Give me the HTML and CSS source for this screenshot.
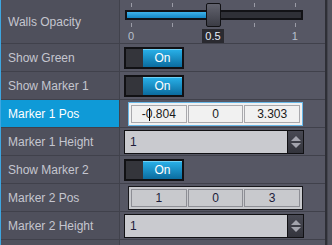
FILE: index.html
```html
<!DOCTYPE html>
<html lang="en">
<head>
  <meta charset="UTF-8" />
  <title>Properties</title>
  <link rel="stylesheet" href="styles.css">
</head>
<body>
  <div class="panel">
    <div class="props">

      <div class="row row-tall">
        <div class="label">Walls Opacity</div>
        <div class="value">
          <div class="slider">
            <div class="ticks"><i></i><i></i><i></i><i></i><i></i></div>
            <div class="track"><div class="fill" style="width: 88px"></div></div>
            <div class="ticks"><i></i><i></i><i></i><i></i><i></i></div>
            <div class="scale">
              <span>0</span><span class="current">0.5</span><span>1</span>
            </div>
            <div class="thumb" style="left: 81px"></div>
          </div>
        </div>
      </div>

      <div class="row">
        <div class="label">Show Green</div>
        <div class="value">
          <div class="toggle"><span class="knob"></span><span class="on">On</span></div>
        </div>
      </div>

      <div class="row">
        <div class="label">Show Marker 1</div>
        <div class="value">
          <div class="toggle"><span class="knob"></span><span class="on">On</span></div>
        </div>
      </div>

      <div class="row selected">
        <div class="label">Marker 1 Pos</div>
        <div class="value">
          <div class="vector focused">
            <span class="cell"><span class="caret"></span>-0.804</span>
            <span class="cell">0</span>
            <span class="cell">3.303</span>
          </div>
        </div>
      </div>

      <div class="row">
        <div class="label">Marker 1 Height</div>
        <div class="value">
          <div class="spin">
            <span class="spin-text">1</span>
            <span class="spin-btn"><b class="up"></b><b class="down"></b></span>
          </div>
        </div>
      </div>

      <div class="row">
        <div class="label">Show Marker 2</div>
        <div class="value">
          <div class="toggle"><span class="knob"></span><span class="on">On</span></div>
        </div>
      </div>

      <div class="row">
        <div class="label">Marker 2 Pos</div>
        <div class="value">
          <div class="vector">
            <span class="cell">1</span>
            <span class="cell">0</span>
            <span class="cell">3</span>
          </div>
        </div>
      </div>

      <div class="row">
        <div class="label">Marker 2 Height</div>
        <div class="value">
          <div class="spin">
            <span class="spin-text">1</span>
            <span class="spin-btn"><b class="up"></b><b class="down"></b></span>
          </div>
        </div>
      </div>

      <div class="row row-rest">
        <div class="label"></div>
        <div class="value"></div>
      </div>

    </div>
    <div class="scrollbar"></div>
  </div>
</body>
</html>
```

FILE: styles.css
```css
body {
  margin: 0;
  background: #53545f;
  font-family: "Liberation Sans", Arial, sans-serif;
  font-size: 12px;
  overflow: hidden;
}
.panel {
  display: flex;
  height: 245px;
  border-left: 1px solid #3ea6e0;
}
.props {
  width: 324px;
  display: flex;
  flex-direction: column;
}
.scrollbar {
  width: 2px;
  background: #2e2f36;
  border-right: 1px solid #45464f;
  flex: none;
}
.row {
  display: flex;
  height: 27px;
  border-bottom: 1px solid #40414b;
  flex: none;
}
.row-tall {
  height: 43px;
}
.row-rest {
  flex: 1;
  border-bottom: none;
}
.label {
  width: 111px;
  padding-left: 7px;
  display: flex;
  align-items: center;
  color: #c5c6cf;
  background: #4f505c;
  border-right: 1px solid #41424c;
  flex: none;
}
.selected .label {
  background: #0f9ad7;
  color: #ffffff;
}
.value {
  flex: 1;
  display: flex;
  align-items: center;
  padding-left: 4px;
  background: #565764;
}

/* slider */
.slider {
  position: relative;
  width: 178px;
  height: 44px;
  margin-left: 1px;
  align-self: flex-start;
}
.ticks {
  display: flex;
  justify-content: space-between;
  padding: 0 7px 0 6px;
  height: 5px;
  margin-top: 3px;
}
.ticks i {
  width: 1px;
  height: 4px;
  background: #9a9ba6;
}
.track {
  height: 6px;
  margin-top: 2px;
  border: 2px solid #121216;
  background: #2f3037;
}
.track + .ticks {
  margin-top: 3px;
}
.fill {
  height: 100%;
  background: linear-gradient(#3fb3ea, #1485c2);
}
.scale {
  display: flex;
  justify-content: space-between;
  align-items: center;
  padding: 0 5px 0 3px;
  margin-top: 0;
  color: #b8c0cc;
  font-size: 11px;
  height: 15px;
}
.scale .current {
  background: #2a2a30;
  color: #e6eefa;
  padding: 1px 3px;
  line-height: 12px;
}
.thumb {
  position: absolute;
  top: 3px;
  width: 13px;
  height: 22px;
  border: 1px solid #111114;
  border-radius: 2px;
  background: linear-gradient(#62636e, #3b3c45);
}

/* toggle */
.toggle {
  display: flex;
  width: 56px;
  height: 18px;
  border: 2px solid #111114;
}
.knob {
  width: 17px;
  background: #34353b;
}
.on {
  flex: 1;
  display: flex;
  align-items: center;
  justify-content: center;
  color: #ffffff;
  font-size: 12px;
  background: linear-gradient(#28aee6, #0b6c9f);
  border-top: 1px solid #6fd0f5;
}

/* vector */
.vector {
  display: flex;
  gap: 1px;
  width: 169px;
  margin-left: 4px;
  padding: 2px;
  height: 18px;
  border: 1px solid #17171b;
  background: #c8c9cd;
}
.vector.focused {
  border-color: #68b8e8;
  background: #f1f1f1;
}
.cell {
  position: relative;
  flex: 1;
  display: flex;
  align-items: center;
  justify-content: center;
  border: 1px solid #8d8e95;
  color: #1c1c3a;
  font-size: 12px;
}
.focused .cell {
  border-color: #a9a9ad;
  color: #1a1a1a;
}
.caret {
  position: absolute;
  left: 17px;
  top: 2px;
  width: 1px;
  height: 13px;
  background: #000;
}

/* spin box */
.spin {
  display: flex;
  width: 178px;
  height: 22px;
  border: 1px solid #111114;
}
.spin-text {
  flex: 1;
  display: flex;
  align-items: center;
  padding-left: 5px;
  background: #c9cacf;
  color: #1c1c3a;
}
.spin-btn {
  width: 15px;
  display: flex;
  flex-direction: column;
  align-items: center;
  justify-content: center;
  gap: 2px;
  background: linear-gradient(#484953, #33343c);
  border-left: 1px solid #111114;
}
.spin-btn b {
  width: 0;
  height: 0;
  border-left: 5px solid transparent;
  border-right: 5px solid transparent;
}
.spin-btn .up {
  border-bottom: 5px solid #a3a4ad;
}
.spin-btn .down {
  border-top: 5px solid #a3a4ad;
}
```
